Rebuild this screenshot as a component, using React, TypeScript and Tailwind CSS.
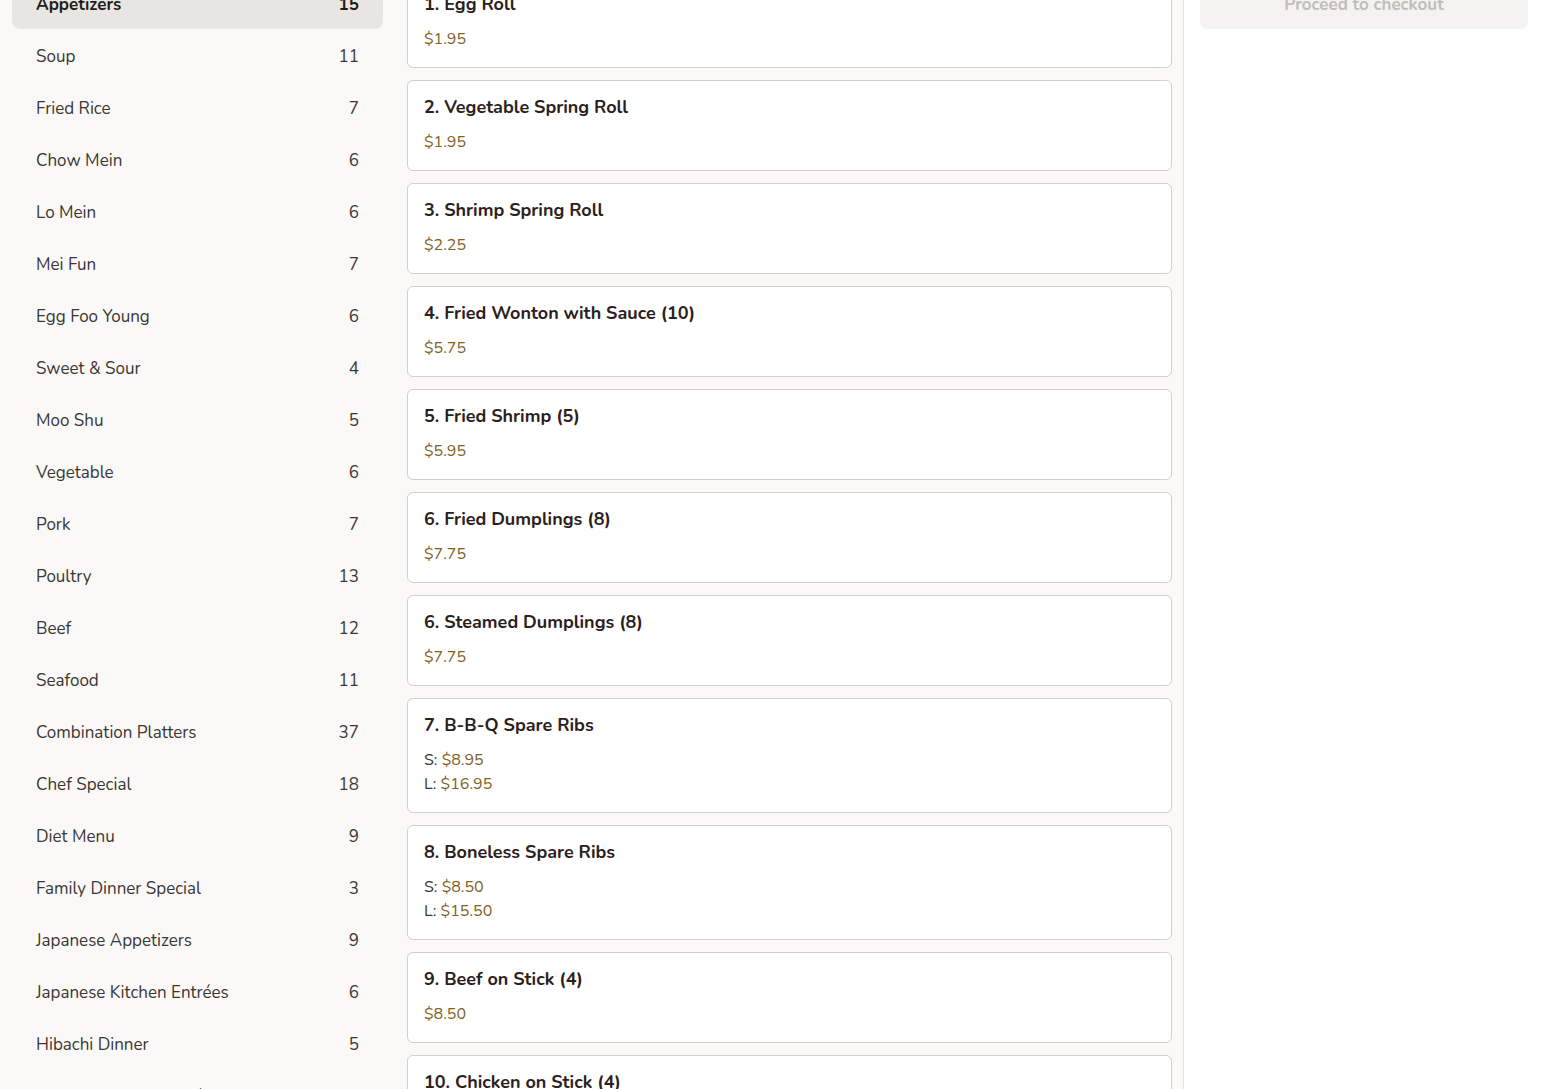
import React from "react";

const categories: [string, number][] = [
  ["Appetizers", 15],
  ["Soup", 11],
  ["Fried Rice", 7],
  ["Chow Mein", 6],
  ["Lo Mein", 6],
  ["Mei Fun", 7],
  ["Egg Foo Young", 6],
  ["Sweet & Sour", 4],
  ["Moo Shu", 5],
  ["Vegetable", 6],
  ["Pork", 7],
  ["Poultry", 13],
  ["Beef", 12],
  ["Seafood", 11],
  ["Combination Platters", 37],
  ["Chef Special", 18],
  ["Diet Menu", 9],
  ["Family Dinner Special", 3],
  ["Japanese Appetizers", 9],
  ["Japanese Kitchen Entrées", 6],
  ["Hibachi Dinner", 5],
  ["Sushi & Sashimi Entrées Dinner", 10],
];

type Item = { name: string; prices: [string | null, string][] };

const items: Item[] = [
  { name: "1. Egg Roll", prices: [[null, "$1.95"]] },
  { name: "2. Vegetable Spring Roll", prices: [[null, "$1.95"]] },
  { name: "3. Shrimp Spring Roll", prices: [[null, "$2.25"]] },
  { name: "4. Fried Wonton with Sauce (10)", prices: [[null, "$5.75"]] },
  { name: "5. Fried Shrimp (5)", prices: [[null, "$5.95"]] },
  { name: "6. Fried Dumplings (8)", prices: [[null, "$7.75"]] },
  { name: "6. Steamed Dumplings (8)", prices: [[null, "$7.75"]] },
  { name: "7. B-B-Q Spare Ribs", prices: [["S", "$8.95"], ["L", "$16.95"]] },
  { name: "8. Boneless Spare Ribs", prices: [["S", "$8.50"], ["L", "$15.50"]] },
  { name: "9. Beef on Stick (4)", prices: [[null, "$8.50"]] },
  { name: "10. Chicken on Stick (4)", prices: [[null, "$8.50"]] },
];

export default function App() {
  return (
    <div
      className="h-[1089px] overflow-hidden bg-[#faf9f7] text-[#2b2420]"
      style={{ fontFamily: "Nunito, Lato, 'Noto Sans', sans-serif" }}
    >
      <div className="-mt-[36px] flex">
        <aside className="w-[395px] shrink-0 px-3 pt-[13px]">
          {categories.map(([name, count], i) => (
            <div
              key={name}
              className={
                "flex h-[52px] items-center justify-between rounded-lg px-6 pt-[4px] text-[17px] " +
                (i === 0 ? "bg-[#e8e6e3] font-bold text-[#231d1a]" : "text-[#3a3633]")
              }
            >
              <span>{name}</span>
              <span>{count}</span>
            </div>
          ))}
        </aside>
        <main className="flex w-[789px] shrink-0 flex-col gap-3 border-r border-[#e4e1dd] pl-3 pr-[11px] pt-[13px]">
          {items.map((it) => (
            <div
              key={it.name}
              className="rounded-md border border-[#d3d0cc] bg-white px-4 pt-4 pb-4"
            >
              <div className="text-[18px] font-bold leading-[21px] text-[#2b211c]">{it.name}</div>
              <div className="mt-[12px]">
                {it.prices.map(([label, price], j) => (
                  <div key={j} className="text-[16px] leading-[24px]">
                    {label && <span className="text-[#3a3633]">{label}: </span>}
                    <span className="text-[#80611f]">{price}</span>
                  </div>
                ))}
              </div>
            </div>
          ))}
        </main>
        <section className="flex-1 bg-white px-4 pt-4">
          <div className="flex h-[49px] items-center justify-center rounded-lg bg-[#f4f3f1] text-[17px] font-bold text-[#c2beb9]">
            Proceed to checkout
          </div>
        </section>
      </div>
    </div>
  );
}
